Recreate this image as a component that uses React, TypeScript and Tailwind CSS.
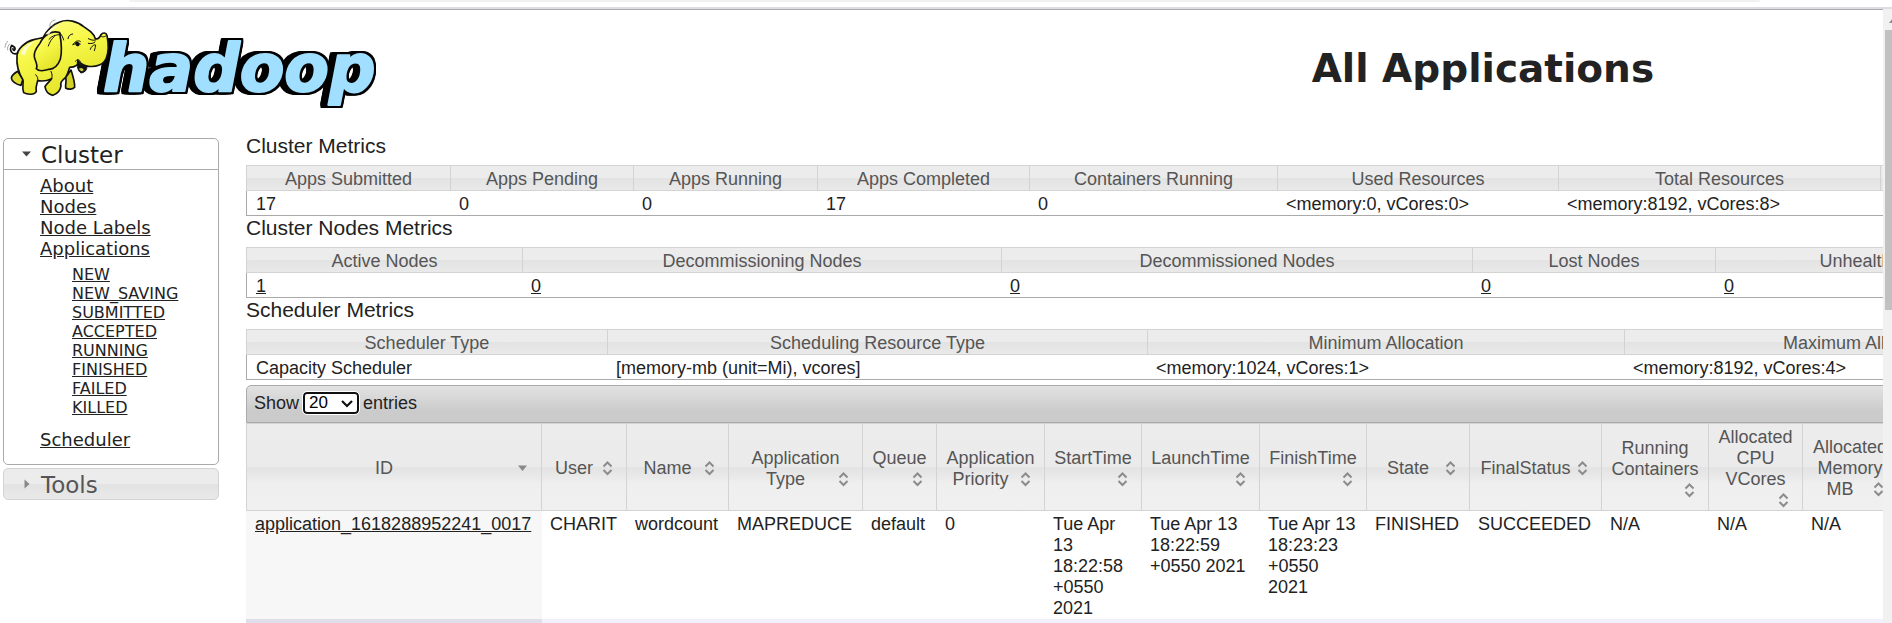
import React from "react";

const SANS = "font-['Liberation_Sans',Arial,sans-serif]";
const VERDANA = "font-['DejaVu_Sans',Verdana,sans-serif]";
const GLASS =
  "bg-[linear-gradient(to_bottom,#ececec_0%,#ececec_48%,#e3e3e3_52%,#e9e9e9_100%)]";
const GLASS_TALL =
  "bg-[linear-gradient(to_bottom,#ececec_0%,#ebebeb_49%,#e3e3e3_51%,#efefef_70%,#f0f0f0_100%)]";

type Metric = { name: string; value: string; width: string; link?: boolean };

const clusterMetrics: Metric[] = [
  { name: "Apps Submitted", value: "17", width: "w-[205px]" },
  { name: "Apps Pending", value: "0", width: "w-[183px]" },
  { name: "Apps Running", value: "0", width: "w-[184px]" },
  { name: "Apps Completed", value: "17", width: "w-[212px]" },
  { name: "Containers Running", value: "0", width: "w-[248px]" },
  { name: "Used Resources", value: "<memory:0, vCores:0>", width: "w-[281px]" },
  { name: "Total Resources", value: "<memory:8192, vCores:8>", width: "w-[322px]" },
  { name: "", value: "", width: "w-[180px]" },
];

const nodeMetrics: Metric[] = [
  { name: "Active Nodes", value: "1", width: "w-[277px]", link: true },
  { name: "Decommissioning Nodes", value: "0", width: "w-[479px]", link: true },
  { name: "Decommissioned Nodes", value: "0", width: "w-[471px]", link: true },
  { name: "Lost Nodes", value: "0", width: "w-[243px]", link: true },
  { name: "Unhealthy Nodes", value: "0", width: "w-[346px]", link: true },
];

const schedulerMetrics: Metric[] = [
  { name: "Scheduler Type", value: "Capacity Scheduler", width: "w-[362px]" },
  { name: "Scheduling Resource Type", value: "[memory-mb (unit=Mi), vcores]", width: "w-[540px]" },
  { name: "Minimum Allocation", value: "<memory:1024, vCores:1>", width: "w-[477px]" },
  { name: "Maximum Allocation", value: "<memory:8192, vCores:4>", width: "w-[477px]" },
];

const appColumns: { name: string; value: string; width: string }[] = [
  { name: "ID", value: "application_1618288952241_0017", width: "w-[296px]" },
  { name: "User", value: "CHARIT", width: "w-[85px]" },
  { name: "Name", value: "wordcount", width: "w-[102px]" },
  { name: "Application Type", value: "MAPREDUCE", width: "w-[134px]" },
  { name: "Queue", value: "default", width: "w-[74px]" },
  { name: "Application Priority", value: "0", width: "w-[108px]" },
  { name: "StartTime", value: "Tue Apr 13 18:22:58 +0550 2021", width: "w-[97px]" },
  { name: "LaunchTime", value: "Tue Apr 13 18:22:59 +0550 2021", width: "w-[118px]" },
  { name: "FinishTime", value: "Tue Apr 13 18:23:23 +0550 2021", width: "w-[107px]" },
  { name: "State", value: "FINISHED", width: "w-[103px]" },
  { name: "FinalStatus", value: "SUCCEEDED", width: "w-[132px]" },
  { name: "Running Containers", value: "N/A", width: "w-[107px]" },
  { name: "Allocated CPU VCores", value: "N/A", width: "w-[94px]" },
  { name: "Allocated Memory MB", value: "N/A", width: "w-[95px]" },
];

const appStates = [
  "NEW",
  "NEW_SAVING",
  "SUBMITTED",
  "ACCEPTED",
  "RUNNING",
  "FINISHED",
  "FAILED",
  "KILLED",
];

function HadoopLogo() {
  return (
    <svg width="384" height="100" viewBox="0 10 384 100" className="block" role="img" aria-label="hadoop">
      <text
        x="103"
        y="91"
        fontSize="65"
        fontWeight="700"
        fontStyle="italic"
        fill="#a0dfff"
        stroke="#a0dfff"
        strokeWidth="2"
        strokeLinejoin="round"
        className="font-['DejaVu_Sans',Verdana,sans-serif] [filter:drop-shadow(2px_0_0_#000)_drop-shadow(-2px_0_0_#000)_drop-shadow(0_2px_0_#000)_drop-shadow(0_-2px_0_#000)_drop-shadow(-5px_0_0_#000)]"
      >
        hadoop
      </text>
      <g transform="translate(-1 14) scale(0.3333)" strokeLinecap="round" strokeLinejoin="round">
        <defs>
          <linearGradient id="hide" x1="0" y1="0" x2="0.5" y2="1">
            <stop offset="0" stopColor="#ffff9a" />
            <stop offset="0.45" stopColor="#f8f84a" />
            <stop offset="1" stopColor="#e3e32a" />
          </linearGradient>
        </defs>
        <g fill="url(#hide)" stroke="#111" strokeWidth="5">
          <path d="M56 172C46 178 38 184 37 192C38 202 52 212 66 214L72 196Z" fill="#dede2c" />
          <path d="M200 190C204 202 198 214 200 222C208 228 222 226 227 220C228 204 222 186 216 168Z" fill="#d2d224" />
          <path
            d="M54 126C54 106 78 84 104 77C116 73 124 73 132 71C144 48 160 32 182 24
               C206 14 236 22 254 38C272 50 284 58 289 74C296 76 302 72 306 62C312 54 322 56 324 64
               C328 84 330 112 322 132C314 152 292 160 268 157C258 156 248 150 238 142
               C238 154 228 160 212 160C208 172 206 182 200 190C186 202 184 206 186 216
               C184 230 174 240 162 244C150 242 140 232 138 218C142 208 154 202 158 194
               C146 200 128 202 116 200C114 212 108 220 112 232C108 244 84 242 74 236
               C68 222 74 210 72 198C58 176 52 152 54 126Z"
          />
          <path
            d="M182 56C158 48 134 64 124 86C116 100 104 108 106 128C108 142 118 152 112 164
               C120 174 138 170 150 166C166 166 178 152 184 136C190 112 186 78 182 56Z"
          />
        </g>
        <g fill="none" stroke="#111">
          <path d="M56 118C38 124 30 108 38 94C44 98 50 98 48 106C46 112 42 108 42 104" strokeWidth="5" />
          <path d="M150 76C158 66 170 62 182 62M148 96C152 84 158 74 166 68M182 56C188 62 192 70 194 78" strokeWidth="3" />
          <path d="M207 74C208 66 214 60 221 60M222 92C226 82 238 78 244 82M222 92C230 88 238 88 244 90" strokeWidth="3" />
          <path d="M268 74C276 78 282 80 290 78M268 88C276 90 284 88 288 84M274 106C276 98 282 94 288 92M286 110C288 104 290 98 290 94" strokeWidth="3" />
          <path d="M158 194C160 186 160 180 156 172M116 200C118 194 116 188 110 182M304 64C308 70 314 70 320 66M230 142C234 134 240 136 244 142" strokeWidth="3" />
          <path d="M18 100C18 92 22 86 26 82M26 108C24 100 28 94 32 90M152 36C152 26 158 20 168 18M160 40C160 34 164 28 172 26" stroke="#777" strokeWidth="2" />
        </g>
        <path d="M236 138C242 152 254 156 264 156C264 168 258 176 246 177C238 172 232 158 236 138Z" fill="#111" stroke="#111" strokeWidth="3" />
        <path d="M240 164C246 160 252 162 254 168C250 174 244 172 240 164Z" fill="#c9c93c" />
        <path d="M228 86C234 80 242 84 242 92C238 100 230 98 228 86Z" fill="#111" />
        <path d="M140 60C152 44 168 36 184 32C168 40 156 50 150 62Z" fill="#fff" opacity="0.8" />
        <path d="M66 120C70 102 86 90 104 84C90 96 80 108 78 124Z" fill="#fff" opacity="0.7" />
      </g>
    </svg>
  );
}

function SideLink({ children }: { children: React.ReactNode }) {
  return (
    <a href="#" className="underline">
      {children}
    </a>
  );
}

function Sidebar() {
  return (
    <nav className={`mt-[8px] w-[216px] shrink-0 text-[18px] leading-[21px] text-[#222] ${VERDANA}`}>
      <section className="rounded-[5px] border border-[#aaa] bg-white">
        <h3 className="border-b border-[#aaa]">
          <button type="button" className="flex h-[30px] w-full items-center pt-[2px] text-[23px] leading-[28px]">
            <svg width="20" height="20" viewBox="0 0 20 20" className="mr-[4px] ml-[13px]" aria-hidden="true">
              <path d="M5 6.500h9L9.500 11.500z" fill="#454545" />
            </svg>
            Cluster
          </button>
        </h3>
        <ul className="pt-[5px] pb-[14px] pl-[36px]">
          <li><SideLink>About</SideLink></li>
          <li><SideLink>Nodes</SideLink></li>
          <li><SideLink>Node Labels</SideLink></li>
          <li>
            <SideLink>Applications</SideLink>
            <ul className="mt-[6px] mb-[12px] pl-[32px] text-[16px] leading-[19px]">
              {appStates.map((s) => (
                <li key={s}><SideLink>{s}</SideLink></li>
              ))}
            </ul>
          </li>
          <li><SideLink>Scheduler</SideLink></li>
        </ul>
      </section>
      <h3 className={`mt-[3px] rounded-[5px] border border-[#d3d3d3] text-[#555] ${GLASS}`}>
        <button type="button" className="flex h-[30px] w-full items-center pt-[2px] text-[23px] leading-[28px]">
          <svg width="20" height="20" viewBox="0 0 20 20" className="mr-[4px] ml-[13px]" aria-hidden="true">
            <path d="M7.500 4.500v9l5-4.500z" fill="#888" />
          </svg>
          Tools
        </button>
      </h3>
    </nav>
  );
}

function MetricsTable({ title, metrics }: { title: string; metrics: Metric[] }) {
  return (
    <section>
      <h3 className="mb-[7px] text-[21px] leading-[24px]">{title}</h3>
      <table className="w-max table-fixed border-separate border-spacing-0 border-b border-[#aaa]">
        <thead>
          <tr>
            {metrics.map((m, i) => (
              <th
                key={i}
                className={`${m.width} border-y border-r border-[#d3d3d3] px-[8px] pt-[3px] font-normal text-[#555] first:border-l ${GLASS}`}
              >
                {m.name}
              </th>
            ))}
          </tr>
        </thead>
        <tbody>
          <tr>
            {metrics.map((m, i) => (
              <td key={i} className="h-[24px] px-[8px] pt-[3px] first:border-l first:border-[#aaa] first:pl-[9px]">
                {m.link ? <a href="#" className="underline">{m.value}</a> : m.value}
              </td>
            ))}
          </tr>
        </tbody>
      </table>
    </section>
  );
}

function SortIcon({ active }: { active: boolean }) {
  return (
    <svg width="20" height="20" viewBox="0 0 20 20" className="float-right block" aria-hidden="true">
      {active ? (
        <path d="M6 7.500h9L10.500 13z" fill="#888" />
      ) : (
        <path d="M6.500 8.500l4-4 4 4M6.500 12l4 4 4-4" fill="none" stroke="#8c8c8c" strokeWidth="2" />
      )}
    </svg>
  );
}

function AppsTable() {
  return (
    <section className="mt-[5px] w-max">
      <div className="flex h-[38px] items-center rounded-t-[5px] border border-[#aaa] bg-[linear-gradient(to_bottom,#e2e2e2_0%,#cbcbcb_70%,#cbcbcb_100%)] pb-[2px] pl-[7px]">
        <label htmlFor="page-size">Show</label>
        <span className="relative mr-[4px] ml-[4px] flex">
          <select
            id="page-size"
            defaultValue="20"
            className="h-[22px] w-[56px] appearance-none rounded-[4px] border-2 border-[#101010] bg-white pl-[4px] text-[17px] leading-[18px] text-black outline-1 outline-white"
          >
            <option>20</option>
            <option>40</option>
            <option>60</option>
            <option>80</option>
            <option>100</option>
          </select>
          <svg width="12" height="8" viewBox="0 0 12 8" className="pointer-events-none absolute top-[8px] right-[6px]" aria-hidden="true">
            <path d="M1 1l5 5 5-5" fill="none" stroke="#101010" strokeWidth="2.200" />
          </svg>
        </span>
        <span>entries</span>
      </div>
      <table className="w-max table-fixed border-separate border-spacing-0">
        <thead>
          <tr>
            {appColumns.map((c, i) => (
              <th
                key={c.name}
                className={`${c.width} border-y border-r border-[#d3d3d3] px-[9px] pt-[3px] align-middle font-normal text-[#555] first:border-l ${GLASS_TALL}`}
              >
                <div className="flow-root">
                  {c.name} <SortIcon active={i === 0} />
                </div>
              </th>
            ))}
          </tr>
        </thead>
        <tbody>
          <tr>
            {appColumns.map((c, i) => (
              <td key={c.name} className="px-[8px] pt-[3px] align-top first:bg-[#f7f7f7] first:pl-[9px]">
                {i === 0 ? <a href="#" className="underline">{c.value}</a> : c.value}
              </td>
            ))}
          </tr>
          <tr>
            {appColumns.map((c) => (
              <td key={c.name} className="h-[24px] bg-[#f1f0fc] first:bg-[#dfdeea]" />
            ))}
          </tr>
        </tbody>
      </table>
    </section>
  );
}

export default function App() {
  return (
    <div className="flex h-screen flex-col overflow-hidden bg-white">
      <div className="flex h-[9px] shrink-0 flex-col justify-between border-b-2 border-[#dcdce2] pr-[132px] pl-[129px]">
        <div className="h-[2px] rounded-b-[4px] bg-[#f1f1f1]" />
      </div>
      <div className="flex min-h-0 flex-1">
        <div className={`min-w-0 flex-1 overflow-hidden border-t border-[#aaa] text-[18px] leading-[21px] text-[#222] ${SANS}`}>
          <header className="grid h-[120px] grid-cols-[23fr_17fr]">
            <a href="#" aria-label="Home"><HadoopLogo /></a>
            <h1 className={`pt-[36px] text-center text-[39px] leading-[46px] font-bold ${VERDANA}`}>
              All Applications
            </h1>
          </header>
          <div className="flex items-start pl-[3px]">
            <Sidebar />
            <main className="ml-[27px] min-w-0 flex-1 pt-[4px]">
              <MetricsTable title="Cluster Metrics" metrics={clusterMetrics} />
              <MetricsTable title="Cluster Nodes Metrics" metrics={nodeMetrics} />
              <MetricsTable title="Scheduler Metrics" metrics={schedulerMetrics} />
              <AppsTable />
            </main>
          </div>
        </div>
        <div className="flex w-[9px] shrink-0 flex-col overflow-hidden bg-[#f1f1f1] pl-[2px]">
          <svg width="14" height="21" viewBox="0 0 14 21" className="shrink-0" aria-hidden="true">
            <path d="M4 14l4-5 4 5z" fill="#8a8a8a" />
          </svg>
          <div className="h-[280px] bg-[#c1c1c1]" />
        </div>
      </div>
    </div>
  );
}
